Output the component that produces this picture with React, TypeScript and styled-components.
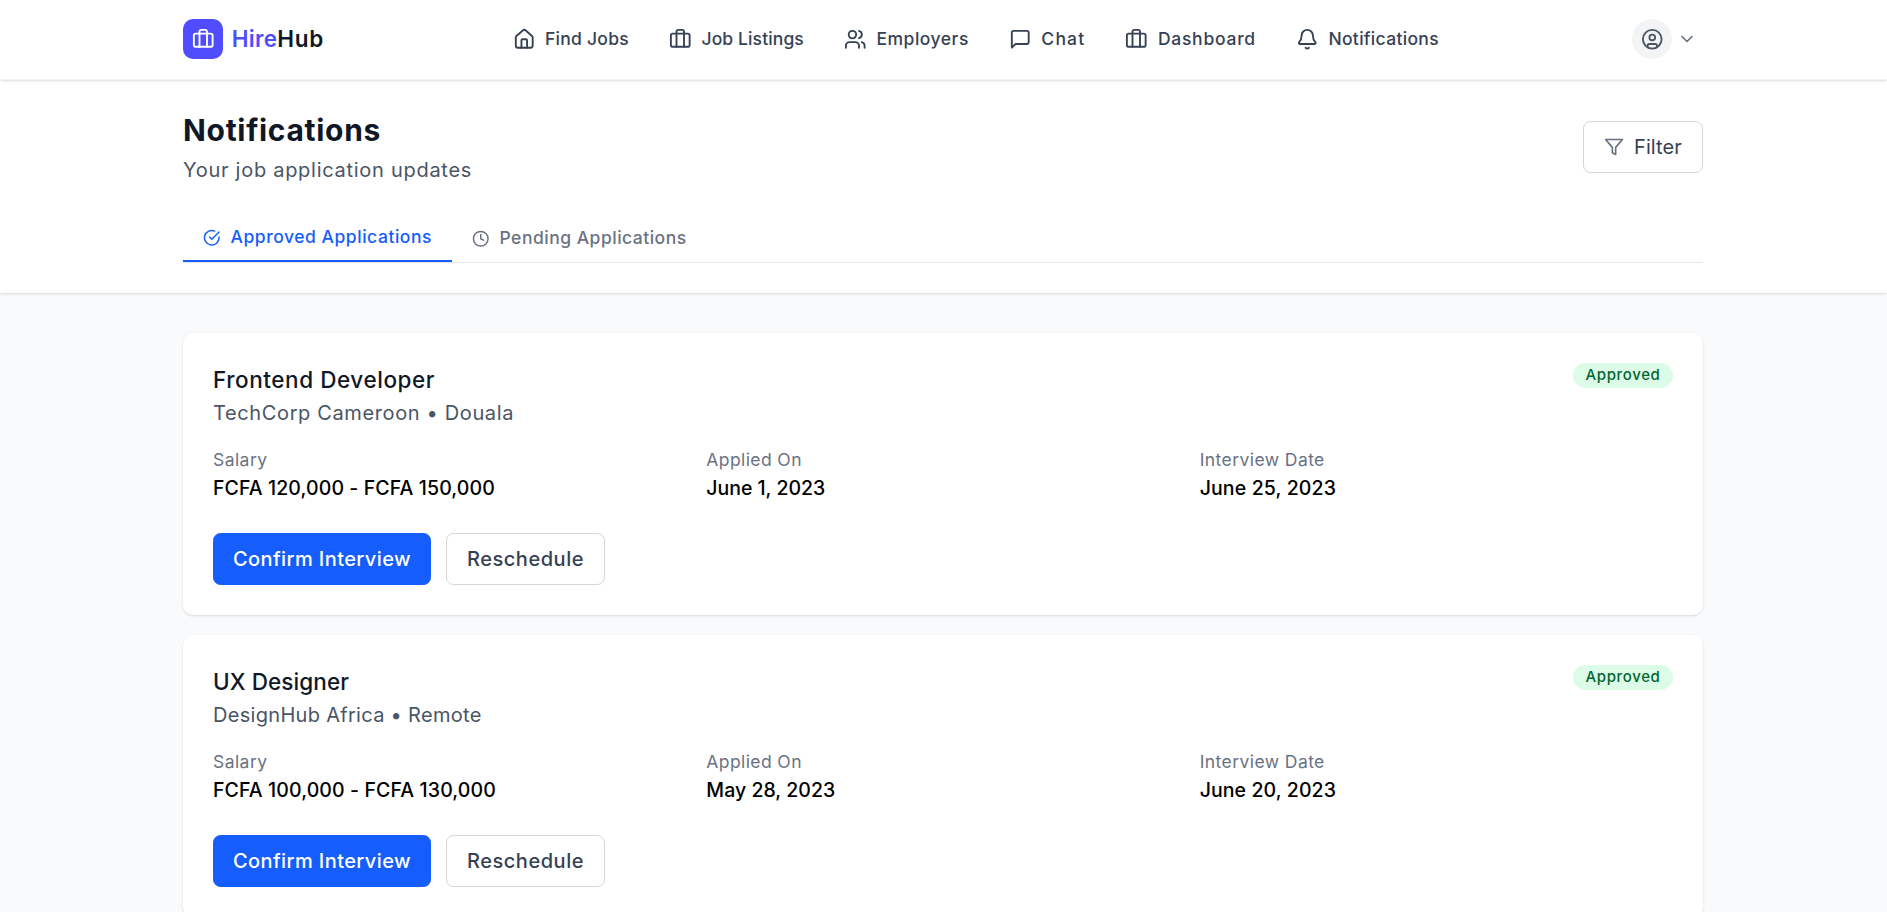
import React from "react";
import styled, { createGlobalStyle } from "styled-components";
import { Bell, Briefcase, CircleUser, House, Users } from "lucide-react";
import { FiCheckCircle, FiChevronDown, FiClock, FiFilter, FiMessageSquare } from "react-icons/fi";

const GlobalStyle = createGlobalStyle`
  *, *::before, *::after { box-sizing: border-box; }
  html, body { margin: 0; height: 100%; }
  body {
    overflow: hidden;
    background: #f9fafb;
    color: #000;
    font-family: Inter, "Open Sans", sans-serif;
  }
  h1, h2, p { margin: 0; }
  button { font-family: inherit; cursor: pointer; }
  svg { display: block; flex: none; }
`;

const softShadow = "0 1px 3px 0 rgba(0, 0, 0, 0.1), 0 1px 2px -1px rgba(0, 0, 0, 0.1)";

const Page = styled.div`
  height: 100vh;
  overflow: hidden;
  background: #f9fafb;
`;

const Container = styled.div`
  width: 1521px;
  margin: 0 auto;
  padding-right: 1px;
`;

const Tracked = styled.span<{ $ls: number }>`
  letter-spacing: ${(p) => p.$ls}px;
  white-space: nowrap;
`;

/* Header */

const Header = styled.header`
  position: relative;
  z-index: 1;
  height: 80px;
  padding-top: 19px;
  background: #fff;
  border-bottom: 1px solid #f3f4f6;
  box-shadow: ${softShadow};
`;

const HeaderRow = styled(Container)`
  display: flex;
  align-items: center;
  height: 40px;
`;

const Logo = styled.div`
  display: flex;
  align-items: center;
  gap: 9px;
  width: 141px;
`;

const LogoMark = styled.div`
  display: grid;
  place-items: center;
  width: 40px;
  height: 40px;
  border-radius: 10px;
  background: #4f4dff;
  color: #fff;
`;

const LogoText = styled.div`
  padding-bottom: 1px;
  font-size: 22.5px;
  font-weight: 600;
  line-height: 34px;
  color: #101828;
  white-space: nowrap;
`;

const LogoAccent = styled(Tracked)`
  color: #4f4dff;
`;

const Nav = styled.nav`
  display: flex;
  gap: 40px;
  margin-left: 188.5px;
`;

const NavItem = styled.a`
  display: flex;
  align-items: center;
  gap: 10px;
  font-size: 17.5px;
  font-weight: 500;
  line-height: 23px;
  color: #364153;

  span { padding-bottom: 2px; }
`;

const UserMenu = styled.div`
  display: flex;
  align-items: center;
  gap: 5px;
  margin-left: auto;
  margin-right: 6px;
  color: #6a7282;
`;

const Avatar = styled.div`
  display: grid;
  place-items: center;
  width: 40px;
  height: 40px;
  border-radius: 50%;
  background: #f3f4f6;
  color: #4a5565;
`;

/* Page heading */

const Hero = styled.section`
  height: 213px;
  padding-top: 29px;
  background: #fff;
  box-shadow: ${softShadow};
`;

const HeroRow = styled.div`
  display: flex;
  align-items: center;
  justify-content: space-between;
`;

const Title = styled.h1`
  padding-top: 1px;
  font-size: 30px;
  font-weight: 700;
  line-height: 40px;
  color: #101828;
`;

const Subtitle = styled.p`
  margin-top: 5px;
  font-size: 20px;
  line-height: 30px;
  color: #4a5565;
`;

const Button = styled.button<{ $primary?: boolean; $weight?: number; $width: number }>`
  display: flex;
  align-items: center;
  justify-content: center;
  gap: 10px;
  width: ${(p) => p.$width}px;
  height: 52px;
  padding: 0;
  border: 1px solid ${(p) => (p.$primary ? "#155dfc" : "#d1d5dc")};
  border-radius: 7.5px;
  background: ${(p) => (p.$primary ? "#155dfc" : "#fff")};
  color: ${(p) => (p.$primary ? "#fff" : "#364153")};
  font-size: 20px;
  font-weight: ${(p) => p.$weight ?? 500};
  line-height: 30px;

  svg { color: #6a7282; }
`;

const Tabs = styled.div`
  display: flex;
  margin-top: 30px;
  border-bottom: 1px solid #e5e7eb;
`;

const Tab = styled.div<{ $active?: boolean }>`
  display: flex;
  align-items: center;
  gap: 10px;
  height: 47px;
  padding: 0 20px;
  border-bottom: ${(p) => (p.$active ? "2px solid #155dfc" : "none")};
  color: ${(p) => (p.$active ? "#155dfc" : "#6a7282")};
  font-size: 17.5px;
  font-weight: 500;
  line-height: 23px;

  span { padding-bottom: 2px; }
`;

/* Application cards */

const List = styled(Container)`
  display: flex;
  flex-direction: column;
  gap: 20px;
  padding-top: 40px;
`;

const Card = styled.article`
  flex: none;
  padding: 30px;
  border-radius: 10px;
  background: #fff;
  box-shadow: ${softShadow};
`;

const CardHead = styled.div`
  display: flex;
  align-items: flex-start;
  justify-content: space-between;
`;

const Role = styled.h2`
  padding-bottom: 2px;
  font-size: 22.5px;
  font-weight: 500;
  line-height: 33px;
  color: #101828;
`;

const Company = styled.p`
  font-size: 20px;
  line-height: 30px;
  color: #4a5565;
`;

const Badge = styled.span`
  display: flex;
  justify-content: center;
  width: 100px;
  height: 25px;
  padding-top: 2px;
  border-radius: 13px;
  background: #dcfce7;
  color: #016630;
  font-size: 15px;
  font-weight: 500;
  line-height: 19px;
`;

const Facts = styled.div`
  display: grid;
  grid-template-columns: repeat(3, 1fr);
  gap: 20px;
  margin-top: 20px;
`;

const FactLabel = styled.p`
  padding-bottom: 2px;
  font-size: 17.5px;
  line-height: 23px;
  color: #6a7282;
`;

const FactValue = styled.p`
  font-size: 19.5px;
  font-weight: 500;
  line-height: 30px;
`;

const Actions = styled.div`
  display: flex;
  gap: 15px;
  margin-top: 30px;
`;

type Text = [text: string, tracking: number];

const navItems: { icon: React.ReactNode; label: Text }[] = [
  { icon: <House size={22.5} />, label: ["Find Jobs", 0.26] },
  { icon: <Briefcase size={22.5} />, label: ["Job Listings", 0.12] },
  { icon: <Users size={22.5} />, label: ["Employers", 0.52] },
  { icon: <FiMessageSquare size={22.5} />, label: ["Chat", 1.19] },
  { icon: <Briefcase size={22.5} />, label: ["Dashboard", 0.75] },
  { icon: <Bell size={22.5} />, label: ["Notifications", 0.32] },
];

const applications: { role: Text; company: Text; facts: [Text, Text][] }[] = [
  {
    role: ["Frontend Developer", 0.56],
    company: ["TechCorp Cameroon • Douala", 0.63],
    facts: [
      [["Salary", 0.44], ["FCFA 120,000 - FCFA 150,000", 0.1]],
      [["Applied On", 0.4], ["June 1, 2023", -0.03]],
      [["Interview Date", 0.43], ["June 25, 2023", 0.13]],
    ],
  },
  {
    role: ["UX Designer", 0.09],
    company: ["DesignHub Africa • Remote", 0.3],
    facts: [
      [["Salary", 0.44], ["FCFA 100,000 - FCFA 130,000", 0.11]],
      [["Applied On", 0.4], ["May 28, 2023", 0.02]],
      [["Interview Date", 0.43], ["June 20, 2023", 0.09]],
    ],
  },
];

const Label = ({ text }: { text: Text }) => <Tracked $ls={text[1]}>{text[0]}</Tracked>;

export default function App() {
  return (
    <Page>
      <GlobalStyle />
      <Header>
        <HeaderRow>
          <Logo>
            <LogoMark>
              <Briefcase size={22.5} />
            </LogoMark>
            <LogoText>
              <LogoAccent $ls={0.3}>Hire</LogoAccent>
              <Tracked $ls={0.7}>Hub</Tracked>
            </LogoText>
          </Logo>
          <Nav>
            {navItems.map((item) => (
              <NavItem key={item.label[0]}>
                {item.icon}
                <Label text={item.label} />
              </NavItem>
            ))}
          </Nav>
          <UserMenu>
            <Avatar>
              <CircleUser size={22.5} />
            </Avatar>
            <FiChevronDown size={20} />
          </UserMenu>
        </HeaderRow>
      </Header>

      <Hero>
        <Container>
          <HeroRow>
            <div>
              <Title>
                <Label text={["Notifications", 0.69]} />
              </Title>
              <Subtitle>
                <Label text={["Your job application updates", 0.72]} />
              </Subtitle>
            </div>
            <Button $width={120} $weight={400}>
              <FiFilter size={20} />
              <Label text={["Filter", 0.11]} />
            </Button>
          </HeroRow>
          <Tabs>
            <Tab $active>
              <FiCheckCircle size={17.5} />
              <Label text={["Approved Applications", 0.54]} />
            </Tab>
            <Tab>
              <FiClock size={17.5} />
              <Label text={["Pending Applications", 0.5]} />
            </Tab>
          </Tabs>
        </Container>
      </Hero>

      <List>
        {applications.map((app) => (
          <Card key={app.role[0]}>
            <CardHead>
              <div>
                <Role>
                  <Label text={app.role} />
                </Role>
                <Company>
                  <Label text={app.company} />
                </Company>
              </div>
              <Badge>
                <Label text={["Approved", 0.64]} />
              </Badge>
            </CardHead>
            <Facts>
              {app.facts.map(([label, value]) => (
                <div key={label[0]}>
                  <FactLabel>
                    <Label text={label} />
                  </FactLabel>
                  <FactValue>
                    <Label text={value} />
                  </FactValue>
                </div>
              ))}
            </Facts>
            <Actions>
              <Button $primary $width={218}>
                <Label text={["Confirm Interview", 0.42]} />
              </Button>
              <Button $width={159}>
                <Label text={["Reschedule", 0.53]} />
              </Button>
            </Actions>
          </Card>
        ))}
      </List>
    </Page>
  );
}
